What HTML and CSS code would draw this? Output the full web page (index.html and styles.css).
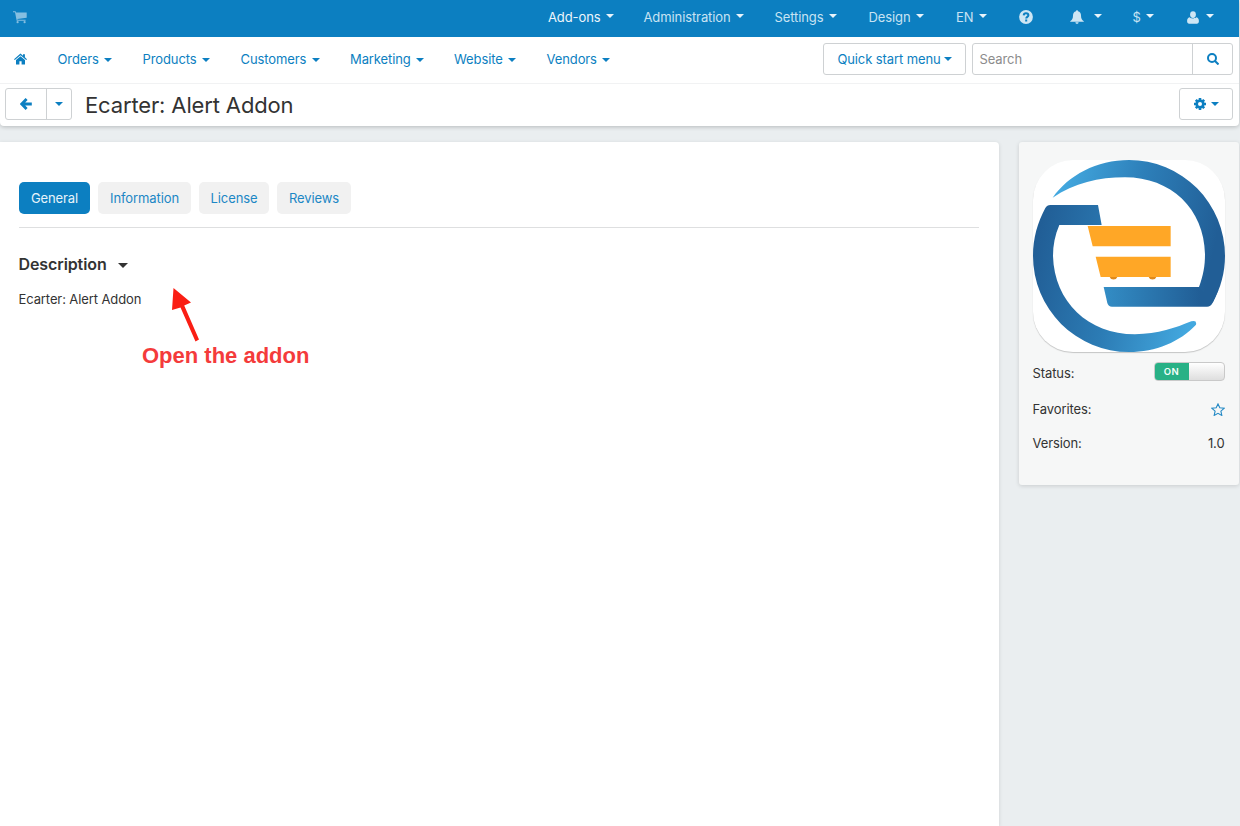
FILE: index.html
```html
<!DOCTYPE html>
<html lang="en">
<head>
<meta charset="utf-8">
<title>Ecarter: Alert Addon</title>
<link rel="stylesheet" href="styles.css">
</head>
<body>
<div class="page">
  <header class="header">
    <div class="topbar">
      <svg class="cart" viewBox="0 0 14 13" width="14" height="13"><path d="M0 .3h2.600l.4 1.200h10.700v5.200L4.400 7.900l.2.9h8v1H3.700L2 1.200H0z"/><circle cx="4.600" cy="11.200" r="1.100"/><circle cx="11.600" cy="11.200" r="1.100"/></svg>
      <nav class="top-menu">
        <a class="item strong addons">Add-ons<i class="caret"></i></a>
        <a class="item administration">Administration<i class="caret"></i></a>
        <a class="item settings">Settings<i class="caret"></i></a>
        <a class="item design">Design<i class="caret"></i></a>
        <a class="item language">EN<i class="caret"></i></a>
        <a class="item help"><svg viewBox="0 0 14 14" width="14" height="14"><circle cx="7" cy="7" r="6.900"/><path class="mark" d="M4.700 5.400C4.800 3.800 5.800 3.200 7 3.200c1.400 0 2.400.8 2.400 2 0 1.600-2.200 1.700-2.200 3.300M7.200 9.600v1.900"/></svg></a>
        <a class="item bell"><svg viewBox="0 0 14 14" width="14" height="14"><path d="M7 .2c.7 0 1 .5 1 1.100C10 1.900 11 3.400 11 5.500c0 3 .9 4.500 2.800 5.700v.5H.2v-.5C2.100 10 3 8.500 3 5.500 3 3.400 4 1.900 6 1.300 6 .7 6.300.2 7 .2zM5.400 12.300h3.200c-.1 1-.7 1.500-1.600 1.500s-1.500-.5-1.600-1.500z"/></svg><i class="caret"></i></a>
        <a class="item currency">$<i class="caret"></i></a>
        <a class="item user"><svg viewBox="0 0 12 13" width="12" height="13"><ellipse cx="6" cy="3.600" rx="2.900" ry="3.400"/><path d="M2.700 6.200c1 1.600 5.600 1.600 6.600 0 2 .4 2.600 2 2.600 4 0 1.600-.8 2.500-2.100 2.500H2.200C.9 12.700.1 11.800.1 10.200c0-2 .6-3.600 2.600-4z"/></svg><i class="caret"></i></a>
      </nav>
    </div>
    <div class="mainbar">
      <a class="home"><svg viewBox="0 0 13 12" width="13" height="12"><path d="M6.500.6 9 2.700V1.200h1.900v3.100L13 6.200l-.8.8-5.700-4.800L.8 7 0 6.200z"/><path d="M6.500 3.200 11 7v4.500H7.600V8.200H5.400v3.300H2V7z"/></svg></a>
      <nav class="main-menu">
        <a class="item orders">Orders<i class="caret"></i></a>
        <a class="item products">Products<i class="caret"></i></a>
        <a class="item customers">Customers<i class="caret"></i></a>
        <a class="item marketing">Marketing<i class="caret"></i></a>
        <a class="item website">Website<i class="caret"></i></a>
        <a class="item">Vendors<i class="caret"></i></a>
      </nav>
      <button class="btn quick">Quick start menu<i class="caret"></i></button>
      <div class="search">
        <span class="search-text">Search</span>
        <span class="search-go"><svg viewBox="0 0 12 12" width="12" height="12"><circle cx="5" cy="5" r="4"/><path d="m8 8 3.500 3.500"/></svg></span>
      </div>
    </div>
    <div class="titlebar">
      <div class="btn back-group">
        <span class="back"><svg viewBox="0 0 12 12" width="12" height="12"><path d="M6.600 1 1.800 6l4.800 5M2.200 6h9.600"/></svg></span>
        <span class="back-more"><i class="caret"></i></span>
      </div>
      <h1 class="title">Ecarter: Alert Addon</h1>
      <button class="btn gear"><svg viewBox="-6 -6 12 12" width="12" height="12"><circle r="3.300"/><path d="M0-6v2.500M0 6V3.500M-6 0h2.500M6 0H3.500M-4.200-4.200l1.700 1.700M4.200 4.200 2.500 2.500M-4.200 4.200l1.700-1.700M4.200-4.200 2.500-2.500"/></svg><i class="caret"></i></button>
    </div>
  </header>
  <div class="body">
    <main class="content">
      <div class="tabs">
        <a class="tab active">General</a>
        <a class="tab info">Information</a>
        <a class="tab license">License</a>
        <a class="tab reviews">Reviews</a>
      </div>
      <h2 class="section">Description<i class="caret"></i></h2>
      <p class="text">Ecarter: Alert Addon</p>
      <svg class="arrow" viewBox="0 0 30 56" width="30" height="56"><path d="m0 22 1.500-22L19 14.500l-6.800 2.900L27 51.500l-3.500 2-15-34z"/></svg>
      <div class="note">Open the addon</div>
    </main>
    <aside class="side">
      <div class="logo">
        <svg viewBox="69 75 576 576" width="192" height="192">
          <defs>
            <linearGradient id="upper" gradientUnits="userSpaceOnUse" x1="130" y1="250" x2="610" y2="355"><stop offset="0" stop-color="#43a8df"/><stop offset=".48" stop-color="#2d7fb9"/><stop offset="1" stop-color="#215e96"/></linearGradient>
            <linearGradient id="base" gradientUnits="userSpaceOnUse" x1="281" y1="485" x2="570" y2="485"><stop offset="0" stop-color="#338dc5"/><stop offset="1" stop-color="#215e96"/></linearGradient>
            <linearGradient id="lower" gradientUnits="userSpaceOnUse" x1="69" y1="363" x2="560" y2="470"><stop offset="0" stop-color="#215e96"/><stop offset=".5" stop-color="#2c7cb5"/><stop offset="1" stop-color="#43a8df"/></linearGradient>
          </defs>
          <path fill="url(#base)" d="M608 503Q602 515 591 515H306Q295 515 292 504L281 456H600L625 465Z"/>
          <path fill="url(#upper)" d="M128 188C175 121 260 75 357 75A288 288 0 0 1 645 363C645 412 632 460 608 503L567 456C580 421 585 393 585 358C583 221 482 127 345 127C266 127 193 144 128 188Z"/>
          <path fill="url(#lower)" d="M275 270H148C135 300 129 330 129 363C133 500 234 598 375 598C444 597 498 578 544 559Q561 554 558 569C511 620 437 651 357 651A288 288 0 0 1 69 363C69 309 83 262 106 219Q111 210 121 210H264Z"/>
          <path fill="#ffa726" d="M233 273H482V334H248ZM257 365H482V426H272Z"/>
          <path fill="#e08a1b" d="M299 426h23a12 11 0 0 1-23 0ZM416 426h23a12 11 0 0 1-23 0Z"/>
        </svg>
      </div>
      <div class="row status"><span>Status:</span><span class="switch"><b class="on">ON</b></span></div>
      <div class="row fav"><span>Favorites:</span><svg viewBox="0 0 14 13" width="14" height="13"><path d="m7 .9 1.800 3.900 4.300.5-3.200 2.900.9 4.200L7 10.300l-3.800 2.100.9-4.200L.9 5.300l4.300-.5z"/></svg></div>
      <div class="row version"><span>Version:</span><span>1.0</span></div>
    </aside>
  </div>
</div>
</body>
</html>
```
FILE: styles.css
```css
* { box-sizing: border-box; }
body {
  margin: 0;
  background: #eaeef0;
  color: #333;
  font: 13px/20px Inter, "Liberation Sans", sans-serif;
  letter-spacing: -.1px;
}
.page { width: 1240px; height: 826px; overflow: hidden; display: flex; flex-direction: column; }
.header {
  width: 1239px; height: 126px; flex: none;
  background: #fff; border-radius: 0 0 4px 4px;
  box-shadow: 0 1px 4px rgba(0,0,0,.22);
}
.caret {
  display: inline-block; flex: none;
  border: 4px solid transparent; border-top-color: currentColor; border-bottom: 0;
}
.item { display: flex; align-items: center; flex: none; white-space: nowrap; }
.item .caret { margin-left: 5.5px; }

.topbar {
  height: 37px; background: #0c7fc1; color: #c8e3f3; padding: 0 25px 3px 13px;
  display: flex; align-items: center;
}
.topbar svg { fill: #cee6f4; }
.topbar .cart { fill: #86bfe1; }
.cart { flex: none; }
.top-menu { display: flex; margin-left: 521px; }
.top-menu .caret { color: #e8f4fb; margin-bottom: 2px; }
.top-menu .strong { color: #ecf6fc; }
.top-menu .mark { fill: none; stroke: #0c7fc1; stroke-width: 2; }
.top-menu .bell .caret { margin-left: 10px; }
.top-menu .user .caret { margin-left: 7px; }
.addons { width: 95.5px; }
.administration { width: 131px; }
.settings { width: 94px; }
.design { width: 87.5px; }
.language { width: 63px; }
.help { width: 51px; }
.bell { width: 62.5px; }
.currency { width: 54px; }

.mainbar {
  height: 47px; border-bottom: 1px solid #f1f2f3; color: #0c7fc1;
  display: flex; align-items: center; padding: 0 6px 2px 14px;
}
.home { display: flex; fill: #0c7fc1; width: 43.5px; }
.main-menu { display: flex; flex: 1; }
.main-menu .caret { margin-top: 2px; }
.orders { width: 85px; }
.products { width: 98px; }
.customers { width: 109.5px; }
.marketing { width: 104px; }
.website { width: 92.5px; }
.btn {
  height: 32px; padding: 0; background: #fff; border: 1px solid #ced1d3; border-radius: 3px;
  color: #0c7fc1; font: inherit; letter-spacing: inherit;
  display: flex; align-items: center; flex: none;
}
.quick { width: 143px; justify-content: center; margin-right: 6px; }
.quick .caret { margin-left: 3px; }
.search {
  width: 261px; height: 32px; border: 1px solid #ced1d3; border-radius: 3px;
  display: flex; color: #8c8c8c;
}
.search-text { flex: 1; padding: 6px 0 0 6.5px; line-height: 19px; }
.search-go {
  width: 40px; border-left: 1px solid #ced1d3;
  display: flex; align-items: center; justify-content: center;
}
.search-go svg, .back svg { fill: none; stroke: #0c7fc1; stroke-width: 2; }

.titlebar { height: 42px; display: flex; align-items: center; padding: 0 6px 2px 5px; }
.back-group { width: 67px; align-items: stretch; }
.back, .back-more { display: flex; align-items: center; justify-content: center; }
.back { width: 40px; }
.back svg { stroke-width: 2.8; }
.back-more { flex: 1; border-left: 1px solid #ced1d3; }
.title { margin: 2px auto 0 13px; font-size: 22px; line-height: 30px; font-weight: 400; letter-spacing: -.14px; }
.gear { width: 54px; justify-content: center; gap: 5px; }
.gear svg { fill: none; stroke: #0c7fc1; stroke-width: 2.6; }

.body { flex: 1; display: flex; align-items: flex-start; padding-top: 16px; gap: 20px; }
.content {
  position: relative; width: 999px; height: 684px; flex: none; padding: 40px 20px 0 19px;
  background: #fff; border-radius: 0 4px 0 0; box-shadow: 0 1px 4px rgba(0,0,0,.12);
}
.tabs { display: flex; gap: 8px; height: 46px; border-bottom: 1px solid #dedfe0; }
.tab {
  width: 71px; height: 32px; border-radius: 5px; background: #f1f1f1; color: #1c87c5;
  display: flex; align-items: center; justify-content: center;
}
.tab.active { background: #0c7fc1; color: #e7f3fa; }
.tab.info { width: 93px; }
.tab.license { width: 70px; }
.tab.reviews { width: 74px; }
.section {
  margin: 25px 0 0 -.5px; height: 22px; display: flex; align-items: center;
  font-size: 16px; font-weight: 600; letter-spacing: -.1px;
}
.section .caret { margin: 2px 0 0 11px; border-width: 5px 5px 0; }
.text { margin: 14px 0 0 -.5px; }
.arrow { position: absolute; left: 172px; top: 146px; fill: #fa1e14; }
.note {
  position: absolute; left: 142px; top: 200px; color: #f43b3b; white-space: nowrap;
  font: bold 22px/28px "Liberation Sans", sans-serif; letter-spacing: 0;
}

.side {
  width: 220px; height: 343px; flex: none; padding: 18px 14px 0;
  background: #f6f7f7; border-radius: 3px; box-shadow: 0 1px 4px rgba(0,0,0,.14);
}
.logo {
  width: 192px; height: 192px; background: #fff; border-radius: 40px;
  box-shadow: 0 1px 1px rgba(0,0,0,.2);
}
.logo svg { display: block; }
.row { display: flex; justify-content: space-between; align-items: center; height: 20px; margin: 0 .5px 0 -.5px; }
.status { margin-top: 11px; }
.fav { margin-top: 16px; }
.fav svg { fill: none; stroke: #2389c5; stroke-width: 1.1; }
.version { margin-top: 14px; }
.switch {
  width: 71px; height: 19px; margin: 0 0 3px; border: 1px solid #c9c9c9; border-radius: 4px;
  background: linear-gradient(#fff, #dedede); overflow: hidden; display: flex;
}
.on {
  width: 34px; background: #28b186; color: #f5fffb;
  font-size: 9.5px; line-height: 17px; font-weight: 600; text-align: center; letter-spacing: .6px;
}
```
